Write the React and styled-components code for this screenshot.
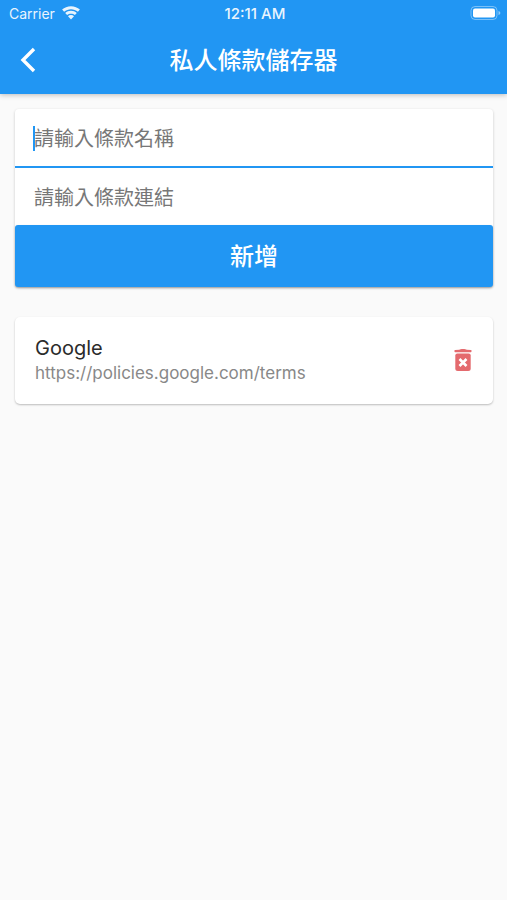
import React, { useState } from "react";
import styled, { createGlobalStyle } from "styled-components";

const colors = {
    primary: "#2196f3",
    background: "#fafafa",
    title: "#2b2b2b",
    subtitle: "#888888",
    hint: "#777777",
    danger: "#e46a6e",
};

const WifiIcon = () => (
    <svg width="18" height="14" viewBox="0 0 18 14">
        <path d="M9 .2C5.500.2 2.400 1.500.1 3.600L2.100 5.800C5.900 2.400 12.100 2.400 15.900 5.800l2-2.200C15.600 1.500 12.500.2 9 .2z" fill="#ffffff" />
        <path d="M9 4.700c-2.200 0-4.200.8-5.800 2.200L5.100 9.100c2.200-1.900 5.600-1.900 7.800 0l1.900-2.200C13.200 5.500 11.200 4.700 9 4.700z" fill="#ffffff" />
        <path d="M9 9.100c-1.200 0-2.200.4-3 1.100L9 13.600l3-3.400c-.8-.7-1.800-1.100-3-1.100z" fill="#ffffff" />
    </svg>
);

const BatteryIcon = () => (
    <svg width="31" height="14" viewBox="0 0 31 14">
        <rect x="1" y="0.5" width="26" height="13" rx="4" fill="none" stroke="#ffffff" strokeOpacity="0.4" />
        <rect x="3" y="2.5" width="22" height="9" rx="2" fill="#ffffff" />
        <path d="M28.5 5v4c1-.3 1.8-1 1.8-2s-.8-1.700-1.800-2z" fill="#ffffff" fillOpacity="0.5" />
    </svg>
);

const BackIcon = () => (
    <svg width="16" height="26" viewBox="0 0 16 26" fill="none" stroke="#ffffff" strokeWidth="3.4">
        <path d="M14 2L3 13l11 11" />
    </svg>
);

const TrashIcon = () => (
    <svg width="18" height="24" viewBox="0 0 18 24">
        <path
            d="M1 4.200C.2 4.200.2 2.200 1 2.100L5.300 1.700C6 .7 12 .7 12.700 1.700L17 2.100c.8.1.8 2.100 0 2.100z"
            fill={colors.danger}
        />
        <path d="M1.300 7.500q0-2 2-2h11.400q2 0 2 2v13q0 2.500-2.500 2.500H3.800q-2.500 0-2.500-2.500z" fill={colors.danger} />
        <path d="M5.500 11l7 7M12.500 11l-7 7" stroke="#ffffff" strokeWidth="2.600" />
    </svg>
);

const App = () => {
    const [name, setName] = useState("");
    const [link, setLink] = useState("");
    const [terms, setTerms] = useState([
        { name: "Google", link: "https://policies.google.com/terms" },
    ]);

    const handleSubmit = (event) => {
        event.preventDefault();
        if (!name || !link) return;
        setTerms([...terms, { name, link }]);
        setName("");
        setLink("");
    };

    const handleDelete = (index) => {
        setTerms(terms.filter((_, i) => i !== index));
    };

    return (
        <>
            <GlobalStyle />
            <Header>
                <StatusBar>
                    <Carrier>
                        Carrier
                        <WifiIcon />
                    </Carrier>
                    <Clock>12:11 AM</Clock>
                    <Battery>
                        <BatteryIcon />
                    </Battery>
                </StatusBar>
                <NavBar>
                    <BackButton type="button" aria-label="返回">
                        <BackIcon />
                    </BackButton>
                    <Title>私人條款儲存器</Title>
                </NavBar>
            </Header>
            <Content>
                <Form onSubmit={handleSubmit}>
                    <Field $active>
                        <Input
                            aria-label="條款名稱"
                            placeholder="請輸入條款名稱"
                            value={name}
                            onChange={(e) => setName(e.target.value)}
                        />
                        {!name && <Caret />}
                    </Field>
                    <Field>
                        <Input
                            aria-label="條款連結"
                            placeholder="請輸入條款連結"
                            value={link}
                            onChange={(e) => setLink(e.target.value)}
                        />
                    </Field>
                    <SubmitButton type="submit">新增</SubmitButton>
                </Form>
                <TermList>
                    {terms.map((item, index) => (
                        <TermCard key={index}>
                            <div>
                                <TermName>{item.name}</TermName>
                                <TermLink href={item.link}>{item.link}</TermLink>
                            </div>
                            <DeleteButton type="button" aria-label="刪除" onClick={() => handleDelete(index)}>
                                <TrashIcon />
                            </DeleteButton>
                        </TermCard>
                    ))}
                </TermList>
            </Content>
        </>
    );
};

export default App;

const GlobalStyle = createGlobalStyle`
    * {
        box-sizing: border-box;
    }
    body {
        margin: 0;
        background-color: ${colors.background};
        font-family: Inter, "Noto Sans CJK TC", sans-serif;
    }
    button, input {
        font-family: inherit;
    }
    svg {
        display: block;
    }
`
const Header = styled.header`
    background-color: ${colors.primary};
    color: #ffffff;
    box-shadow: 0 1px 5px rgba(0, 0, 0, 0.25);
`
const StatusBar = styled.div`
    display: grid;
    grid-template-columns: 1fr auto 1fr;
    align-items: center;
    height: 26px;
    padding: 0 6px 0 9px;
    font-size: 14px;
`
const Carrier = styled.div`
    display: flex;
    align-items: center;
    gap: 7px;
    opacity: 0.9;
`
const Clock = styled.div`
    font-size: 15px;
    font-weight: 500;
    opacity: 0.9;
`
const Battery = styled.div`
    justify-self: end;
`
const NavBar = styled.div`
    display: grid;
    grid-template-columns: 56px 1fr 56px;
    align-items: center;
    height: 68px;
`
const BackButton = styled.button`
    display: flex;
    align-items: center;
    justify-content: center;
    height: 48px;
    padding: 0;
    border: none;
    background: none;
    cursor: pointer;
`
const Title = styled.h1`
    margin: 0;
    padding-top: 2px;
    font-size: 24px;
    font-weight: 500;
    line-height: 32px;
    text-align: center;
`
const Content = styled.main`
    padding: 15px 14px 15px 15px;
`
const Form = styled.form`
    display: flex;
    flex-direction: column;
    margin-bottom: 30px;
    background-color: #ffffff;
    border-radius: 4px;
    box-shadow: 0 1px 3px rgba(0, 0, 0, 0.2);
`
const Field = styled.div`
    position: relative;
    border-bottom: ${(props) => (props.$active ? `2px solid ${colors.primary}` : "none")};
`
const Input = styled.input`
    display: block;
    width: 100%;
    height: 57px;
    padding: 2px 19px 0;
    border: none;
    outline: none;
    background: none;
    color: ${colors.title};
    font-size: 20px;
    &::placeholder {
        color: ${colors.hint};
        opacity: 1;
    }
`
const Caret = styled.span`
    position: absolute;
    top: 17px;
    left: 18px;
    width: 2px;
    height: 25px;
    background-color: ${colors.primary};
`
const SubmitButton = styled.button`
    height: 62px;
    padding: 0 0 3px;
    border: none;
    border-radius: 3px;
    background-color: ${colors.primary};
    color: #ffffff;
    font-size: 24px;
    font-weight: 500;
    box-shadow: 0 1px 2px rgba(0, 0, 0, 0.25);
    cursor: pointer;
`
const TermList = styled.ul`
    display: flex;
    flex-direction: column;
    gap: 10px;
    margin: 0;
    padding: 0;
    list-style: none;
`
const TermCard = styled.li`
    display: flex;
    align-items: center;
    justify-content: space-between;
    padding: 18px 21px 19px 20px;
    background-color: #ffffff;
    border-radius: 5px;
    box-shadow: 0 1px 2px rgba(0, 0, 0, 0.25);
`
const TermName = styled.div`
    color: ${colors.title};
    font-size: 20px;
    line-height: 26px;
`
const TermLink = styled.a`
    display: block;
    color: ${colors.subtitle};
    font-size: 17px;
    line-height: 24px;
    text-decoration: none;
`
const DeleteButton = styled.button`
    padding: 0;
    border: none;
    background: none;
    cursor: pointer;
`
